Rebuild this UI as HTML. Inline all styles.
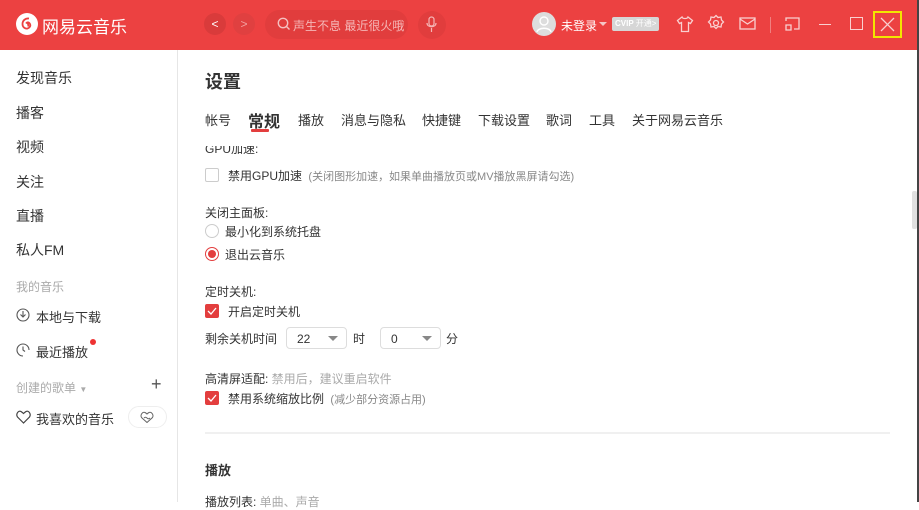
<!DOCTYPE html>
<html><head><meta charset="utf-8"><style>
*{margin:0;padding:0;box-sizing:border-box}
body{width:919px;height:502px;overflow:hidden;background:#fff;font-family:"Liberation Sans","Noto Sans CJK SC",sans-serif;color:#333;position:relative}
.a{position:absolute;white-space:nowrap}
.hd{position:absolute;left:0;top:0;width:919px;height:50px;background:#EC4141}
.side{position:absolute;left:0;top:50px;width:178px;height:452px;border-right:1px solid #e6e6e6}
.nav{font-size:14px;color:#333}
.g{color:#aaa;font-size:12px}
.cb{position:absolute;width:14px;height:14px;border:1px solid #ccc;border-radius:2px;background:#fff}
.cb.on{background:#e33e3e;border-color:#e33e3e}
.t12{font-size:12px;color:#333}
.tab{position:absolute;top:110px;font-size:13px;color:#333;white-space:nowrap}
.sel{position:absolute;height:22px;border:1px solid #ddd;border-radius:4px;font-size:12px;padding:4px 0 0 10px}
.sel:after{content:"";position:absolute;right:8px;top:8px;border:5px solid transparent;border-top:5px solid #888}
</style></head><body>
<div class="hd">
<svg class="a" style="left:15px;top:12px" width="24" height="24" viewBox="0 0 24 24"><circle cx="12" cy="12" r="11" fill="#fff"/><path d="M14 6.5c-3.5-0.5-6.5 2-6.5 5.5s3 5 5 4.5 3.5-2.5 2.5-4.5-3-2-4-0.5M12.5 9.5l1 5" stroke="#EC4141" stroke-width="1.8" fill="none"/></svg>
<div class="a" style="left:42px;top:13px;color:#fff;font-size:17px">网易云音乐</div>
<div class="a" style="left:204px;top:13px;width:22px;height:22px;border-radius:50%;background:#d93b3b;color:#fff;font-size:12px;text-align:center;line-height:22px">&lt;</div>
<div class="a" style="left:233px;top:13px;width:22px;height:22px;border-radius:50%;background:#e04040;color:#f3a0a0;font-size:12px;text-align:center;line-height:22px">&gt;</div>
<div class="a" style="left:265px;top:10px;width:143px;height:29px;border-radius:15px;background:#e13d3d"></div>
<svg class="a" style="left:277px;top:17px" width="14" height="14"><circle cx="6" cy="6" r="4.7" stroke="#f5c0c0" stroke-width="1.4" fill="none"/><path d="M9.5 9.5l3 3" stroke="#f5c0c0" stroke-width="1.4"/></svg>
<div class="a" style="left:293px;top:17px;color:#f5b5b5;font-size:12px;width:112px;overflow:hidden">声生不息 最近很火哦</div>
<div class="a" style="left:418px;top:11px;width:28px;height:28px;border-radius:50%;background:#e13d3d"></div>
<svg class="a" style="left:424px;top:16px" width="16" height="18"><rect x="5" y="1" width="5" height="9" rx="2.5" stroke="#f5b5b5" fill="none" stroke-width="1.2"/><path d="M3 7c0 5 9 5 9 0M7.5 12v4" stroke="#f5b5b5" fill="none" stroke-width="1.2"/></svg>
<div class="a" style="left:532px;top:12px;width:24px;height:24px;border-radius:50%;background:#ddd"></div>
<svg class="a" style="left:536px;top:15px" width="16" height="18"><circle cx="8" cy="6" r="4" stroke="#fff" fill="none" stroke-width="1.4"/><path d="M1 17c1-5 13-5 14 0" stroke="#fff" fill="none" stroke-width="1.4"/></svg>
<div class="a" style="left:561px;top:17px;color:#fff;font-size:12px">未登录</div>
<div class="a" style="left:599px;top:22px;border:4px solid transparent;border-top:4px solid #f5c5c5"></div>
<div class="a" style="left:612px;top:17px;width:47px;height:14px;background:#d6d6d6;border-radius:2px;color:#fff;font-size:8px;line-height:14px;padding-left:3px;font-weight:bold">CVIP <span style="font-weight:normal">开通&gt;</span></div>
<svg class="a" style="left:676px;top:15px" width="18" height="18" stroke="#f9d0d0" fill="none" stroke-width="1.3"><path d="M6 2L1.5 5.5l2 3 2-1v9h7v-9l2 1 2-3L12 2c-0.5 2-5.5 2-6 0z"/></svg>
<svg class="a" style="left:707px;top:14px" width="18" height="18" stroke="#f9d0d0" fill="none" stroke-width="1.3"><path d="M9 1.5l2 2 3-0.5 0.5 3 2 2-2 2-0.5 3-3-0.5-2 2-2-2-3 0.5-0.5-3-2-2 2-2 0.5-3 3 0.5z"/><circle cx="9" cy="9" r="2.5"/></svg>
<svg class="a" style="left:739px;top:16px" width="18" height="16" stroke="#f9d0d0" fill="none" stroke-width="1.3"><rect x="1" y="2" width="15" height="11"/><path d="M1 3l7.5 5 7.5-5"/></svg>
<div class="a" style="left:770px;top:17px;width:1px;height:16px;background:#f08080"></div>
<svg class="a" style="left:785px;top:16px" width="16" height="16" stroke="#f9d0d0" fill="none" stroke-width="1.3"><path d="M1 5V2h13v11h-5M1 9h5v5H1z"/></svg>
<div class="a" style="left:819px;top:24px;width:12px;height:1px;background:#f9d0d0"></div>
<div class="a" style="left:850px;top:17px;width:13px;height:13px;border:1.3px solid #f9d0d0"></div>
<div class="a" style="left:873px;top:11px;width:29px;height:27px;border:2px solid #f2e600"></div>
<svg class="a" style="left:880px;top:17px" width="15" height="15" stroke="#f9d0d0" stroke-width="1.3"><path d="M1 1l13 13M14 1L1 14"/></svg>
</div>
<div class="a" style="left:917px;top:0;width:2px;height:502px;background:#444"></div>

<div class="side">
<div class="a nav" style="left:16px;top:18px">发现音乐</div>
<div class="a nav" style="left:16px;top:53px">播客</div>
<div class="a nav" style="left:16px;top:87px">视频</div>
<div class="a nav" style="left:16px;top:122px">关注</div>
<div class="a nav" style="left:16px;top:156px">直播</div>
<div class="a nav" style="left:16px;top:190px">私人FM</div>
<div class="a g" style="left:16px;top:228px">我的音乐</div>
<svg class="a" style="left:16px;top:258px" width="14" height="14" stroke="#555" fill="none" stroke-width="1.1"><circle cx="7" cy="7" r="6"/><path d="M7 3v6M4.5 6.5L7 9l2.5-2.5"/></svg>
<div class="a nav" style="left:36px;top:257px;font-size:13px">本地与下载</div>
<svg class="a" style="left:16px;top:293px" width="14" height="14" stroke="#555" fill="none" stroke-width="1.1"><path d="M13 7a6 6 0 1 0-6 6"/><path d="M7 3.5V7l2 1.5"/></svg>
<div class="a nav" style="left:36px;top:292px;font-size:13px">最近播放</div>
<div class="a" style="left:90px;top:289px;width:6px;height:6px;border-radius:50%;background:#e33"></div>
<div class="a g" style="left:16px;top:329px">创建的歌单 <span style="font-size:8px">▼</span></div>
<div class="a" style="left:151px;top:324px;font-size:18px;color:#555;font-weight:300">+</div>
<svg class="a" style="left:16px;top:360px" width="15" height="14" stroke="#444" fill="none" stroke-width="1.2"><path d="M7.5 13L1.5 7C-0.5 4 2.5 0 5 1.5c1.5 1 2.5 2 2.5 2s1-1 2.5-2c2.5-1.5 5.5 2.5 3.5 5.5z"/></svg>
<div class="a nav" style="left:36px;top:359px;font-size:13px">我喜欢的音乐</div>
<div class="a" style="left:128px;top:356px;width:39px;height:22px;border:1px solid #eee;border-radius:11px"></div>
<svg class="a" style="left:140px;top:361px" width="14" height="12" stroke="#666" fill="none" stroke-width="1"><path d="M7 11.5L1.5 6.5C0 4 2.5 0.5 5 1.5 6 2 7 3 7 3s1-1 2-1.5c2.5-1 5 2.5 3.5 5z"/><path d="M4 7c1-1 2-1 3 0s2 1 3 0"/></svg>
</div>

<div class="a" style="left:205px;top:68px;font-size:18px;font-weight:bold;color:#333">设置</div>
<div class="tab" style="left:205px">帐号</div>
<div class="tab" style="left:248px;top:108px;font-size:16px;font-weight:bold">常规</div>
<div class="tab" style="left:298px">播放</div>
<div class="tab" style="left:341px">消息与隐私</div>
<div class="tab" style="left:422px">快捷键</div>
<div class="tab" style="left:478px">下载设置</div>
<div class="tab" style="left:546px">歌词</div>
<div class="tab" style="left:589px">工具</div>
<div class="tab" style="left:632px">关于网易云音乐</div>
<div class="a" style="left:251px;top:129px;width:18px;height:3px;background:#e33e3e;border-radius:1px"></div>

<div class="a t12" style="left:205px;top:146px;height:8px;overflow:hidden;line-height:6px">GPU加速:</div>
<div class="cb" style="left:205px;top:168px"></div>
<div class="a t12" style="left:228px;top:167px">禁用GPU加速 <span style="color:#888;font-size:11px">&nbsp;(关闭图形加速，如果单曲播放页或MV播放黑屏请勾选)</span></div>
<div class="a t12" style="left:205px;top:204px">关闭主面板:</div>
<div class="a" style="left:205px;top:224px;width:14px;height:14px;border:1px solid #ccc;border-radius:50%"></div>
<div class="a t12" style="left:225px;top:223px">最小化到系统托盘</div>
<div class="a" style="left:205px;top:247px;width:14px;height:14px;border:1px solid #e33e3e;border-radius:50%"></div>
<div class="a" style="left:208px;top:250px;width:8px;height:8px;background:#e33e3e;border-radius:50%"></div>
<div class="a t12" style="left:225px;top:246px">退出云音乐</div>
<div class="a t12" style="left:205px;top:283px">定时关机:</div>
<div class="cb on" style="left:205px;top:304px"></div>
<svg class="a" style="left:207px;top:307px" width="10" height="8" stroke="#fff" fill="none" stroke-width="1.3"><path d="M1 4l3 3 5-6"/></svg>
<div class="a t12" style="left:228px;top:303px">开启定时关机</div>
<div class="a t12" style="left:205px;top:330px">剩余关机时间</div>
<div class="sel" style="left:286px;top:327px;width:61px">22</div>
<div class="a t12" style="left:353px;top:330px">时</div>
<div class="sel" style="left:380px;top:327px;width:61px">0</div>
<div class="a t12" style="left:446px;top:330px">分</div>
<div class="a t12" style="left:205px;top:370px">高清屏适配: <span style="color:#aaa">禁用后，建议重启软件</span></div>
<div class="cb on" style="left:205px;top:391px"></div>
<svg class="a" style="left:207px;top:394px" width="10" height="8" stroke="#fff" fill="none" stroke-width="1.3"><path d="M1 4l3 3 5-6"/></svg>
<div class="a t12" style="left:228px;top:390px">禁用系统缩放比例 <span style="color:#888;font-size:11px">&nbsp;(减少部分资源占用)</span></div>
<div class="a" style="left:205px;top:432px;width:685px;height:2px;background:#f0f0f0"></div>
<div class="a" style="left:205px;top:460px;font-size:13px;font-weight:bold;color:#333">播放</div>
<div class="a t12" style="left:205px;top:493px">播放列表: <span style="color:#aaa">单曲、声音</span></div>
<div class="a" style="left:912px;top:191px;width:5px;height:38px;background:#e0e0e0;border-radius:2px"></div>
</body></html>
